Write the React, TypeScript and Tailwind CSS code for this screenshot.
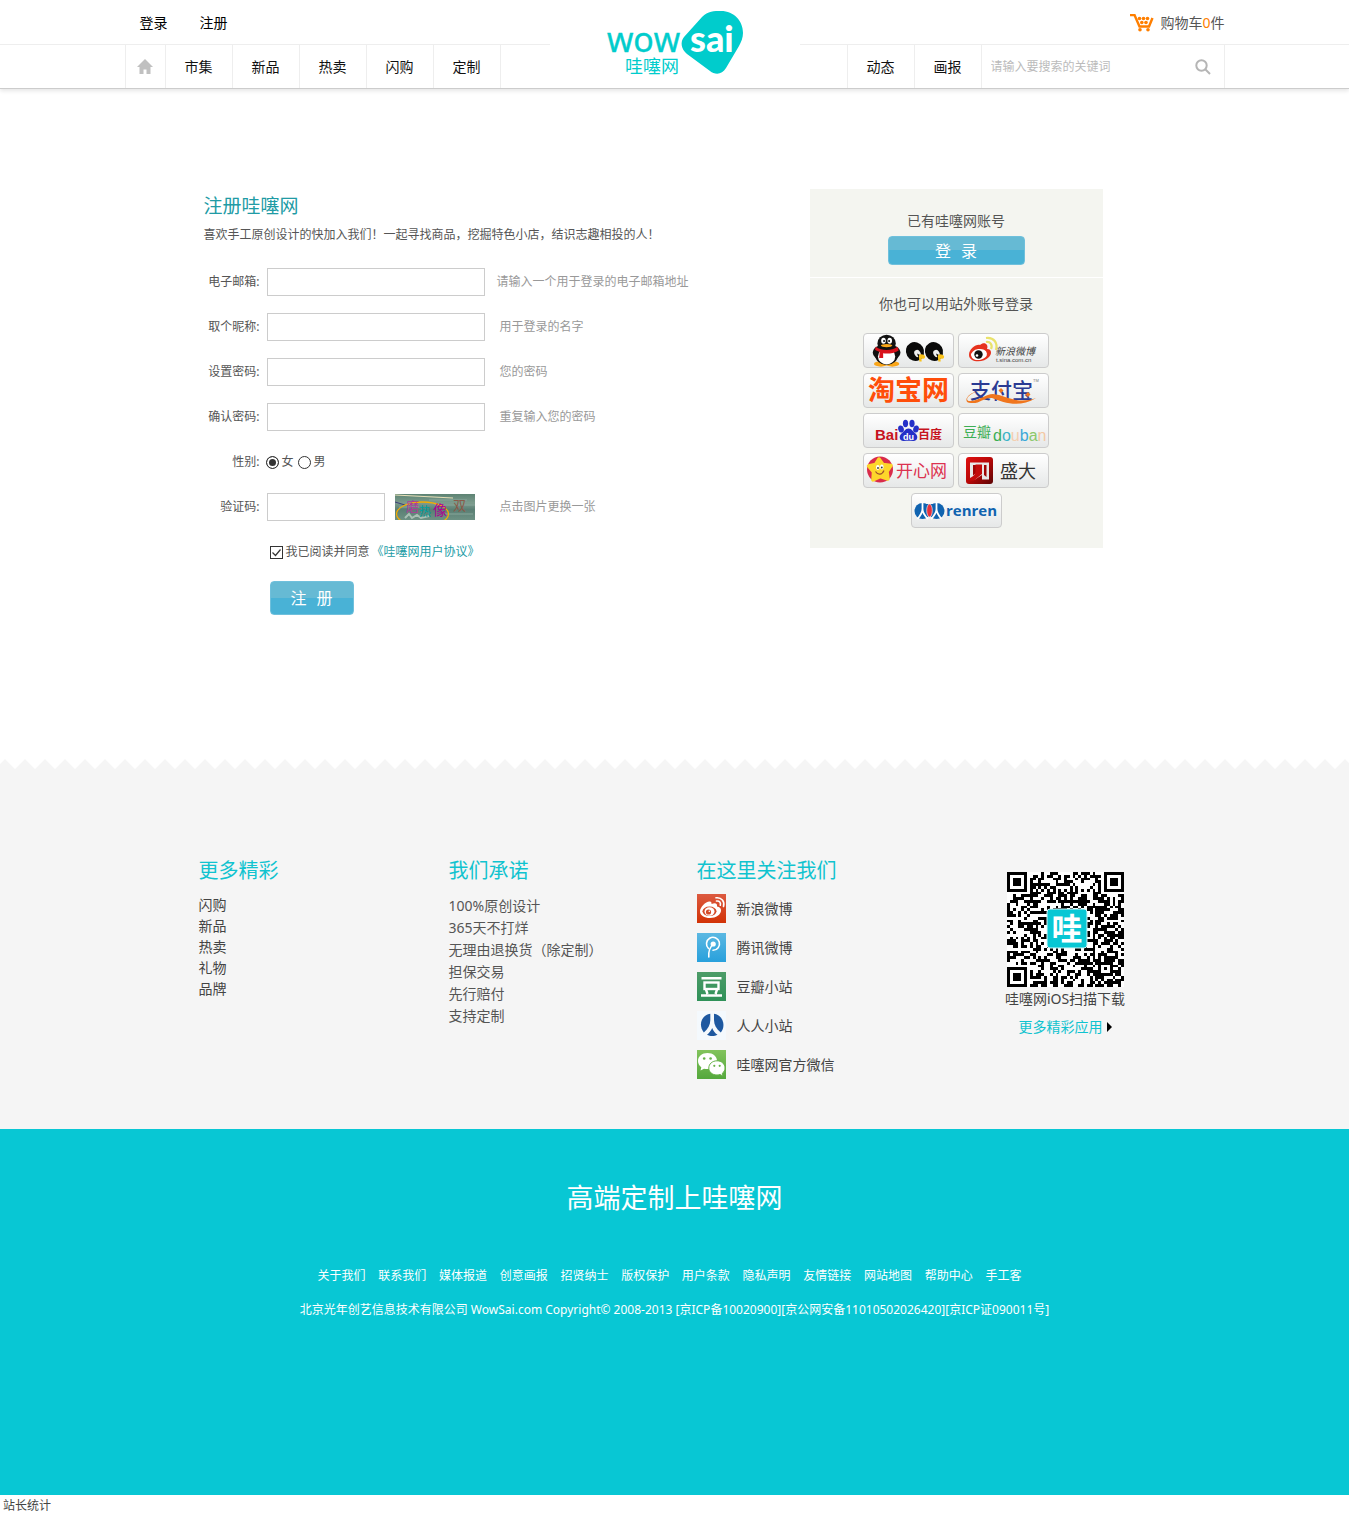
import type { ReactNode } from 'react';

const FONT = "font-['Noto_Sans','Noto_Sans_CJK_SC',sans-serif]";

function SiteLogo() {
  return (
    <svg viewBox="0 0 250 88" className="h-[88px] w-[250px]" role="img" aria-label="wowsai 哇噻网">
      <path
        d="M134 37 L152 17 C158 11 164 11 171 11 C184 11 193 21 193 33 C193 38 191 42 189 46 L176 68 C172 75 165 75 160 71 L137 54 C131 49 130 42 134 37Z"
        fill="#00cccc"
      />
      <g fill="#00cccc">
        <text x="57" y="52" fontFamily="Open Sans" fontSize="34" stroke="#00cccc" strokeWidth="0.5">wow</text>
        <text x="75" y="73" fontFamily="Noto Sans CJK SC" fontSize="18">哇噻网</text>
      </g>
      <text x="140" y="52" fontFamily="Lato" fontWeight="900" fontSize="36" fill="#fff">sai</text>
    </svg>
  );
}

function HomeIcon() {
  return (
    <svg viewBox="0 0 16 15" className="h-[15px] w-4" fill="#c0c0c0" aria-hidden="true">
      <path d="M8 0 16 8H13.500V15H9.500V10.500H6.500V15H2.500V8H0Z" />
    </svg>
  );
}

function CartIcon() {
  return (
    <svg viewBox="0 0 24 18" className="h-[18px] w-6" aria-hidden="true">
      <path d="M0 1H4.500L9.500 12.500H19L22.500 4" fill="none" stroke="#ff7f00" strokeWidth="2.400" />
      <g fill="#ff7f00">
        <circle cx="9.500" cy="4.500" r="1.800" />
        <circle cx="13.500" cy="4.500" r="1.800" />
        <circle cx="17.500" cy="4.500" r="1.800" />
        <circle cx="11.800" cy="8.500" r="1.800" />
        <circle cx="16" cy="8.500" r="1.800" />
        <circle cx="10" cy="15.800" r="1.800" />
        <circle cx="18" cy="15.800" r="1.800" />
      </g>
    </svg>
  );
}

function SearchIcon() {
  return (
    <svg viewBox="0 0 16 16" className="size-4" fill="none" stroke="#b5b5b5" strokeWidth="2" aria-hidden="true">
      <circle cx="6.500" cy="6.500" r="5.200" />
      <path d="m10.500 10.500 4.500 4.500" />
    </svg>
  );
}

function NavLink({ children }: { children: ReactNode }) {
  return (
    <a href="#" className="flex w-[67px] items-center justify-center border-l border-[#eee] text-sm text-[#111]">
      {children}
    </a>
  );
}

function Header() {
  return (
    <header className="grid grid-cols-[1fr_250px_1fr] border-b border-[#ccc] bg-white shadow-[0_2px_4px_rgba(0,0,0,0.1)]">
      <div>
        <div className="flex h-[45px] justify-end border-b border-[#eee] pt-[2px]">
          <div className="flex w-full max-w-[425px] items-center gap-8 pl-[15px] text-sm text-black">
            <a href="#">登录</a>
            <a href="#">注册</a>
          </div>
        </div>
        <nav className="ml-auto flex h-[43px] w-full max-w-[425px]">
          <a href="#" aria-label="首页" className="flex w-[40px] items-center justify-center border-l border-[#eee]">
            <HomeIcon />
          </a>
          {['市集', '新品', '热卖', '闪购', '定制'].map((t) => (
            <NavLink key={t}>{t}</NavLink>
          ))}
          <span className="border-l border-[#eee]" />
        </nav>
      </div>
      <a href="#">
        <SiteLogo />
      </a>
      <div>
        <div className="flex h-[45px] border-b border-[#eee] pt-[2px]">
          <a href="#" className="flex w-full max-w-[425px] items-center justify-end gap-[6px] text-sm text-[#555]">
            <CartIcon />
            <span>
              购物车<span className="text-[#ff7f00]">0</span>件
            </span>
          </a>
        </div>
        <div className="flex h-[43px] w-full max-w-[425px] pl-[47px]">
          <NavLink>动态</NavLink>
          <NavLink>画报</NavLink>
          <form className="flex flex-1 items-center border-x border-[#eee] pr-[13px] pl-[9px]">
            <input
              type="text"
              aria-label="搜索"
              placeholder="请输入要搜索的关键词"
              className="min-w-0 flex-1 text-xs outline-none placeholder:text-[#bbb]"
            />
            <button type="button" aria-label="搜索">
              <SearchIcon />
            </button>
          </form>
        </div>
      </div>
    </header>
  );
}

function Captcha() {
  return (
    <svg viewBox="0 0 80 26" className="h-[26px] w-20" role="img" aria-label="验证码图片">
      <defs>
        <linearGradient id="captcha-bg" x1="0" y1="0" x2="0" y2="1">
          <stop offset="0" stopColor="#5d8373" />
          <stop offset="0.35" stopColor="#7d9c8e" />
          <stop offset="0.6" stopColor="#5a7f74" />
          <stop offset="1" stopColor="#6d9184" />
        </linearGradient>
      </defs>
      <rect width="80" height="26" fill="url(#captcha-bg)" />
      <path d="M34 6h38M40 11h40M50 20h28M4 13h20" stroke="#88a69a" strokeWidth="1" />
      <path d="M10 24l4-4 3 4 5-3 4 3 8-2" fill="none" stroke="#a9c0b4" strokeWidth="2" />
      <path d="M0 1 58 4" stroke="#e8e0b8" strokeWidth="1" />
      <path d="M0 8 10 11" stroke="#3c3c78" strokeWidth="1" />
      <ellipse cx="27.500" cy="20" rx="26" ry="12" fill="none" stroke="#f5ac00" strokeWidth="1.300" />
      <g fontFamily="Noto Sans CJK SC">
        <text x="11" y="17" fontSize="13" fill="#b0389a">磨</text>
        <text x="24" y="22" fontSize="12" fill="#00a0a0">热</text>
        <text x="38" y="21" fontSize="14" fill="#b00090">像</text>
        <text x="58" y="16" fontSize="13" fill="#8a5a48">双</text>
      </g>
    </svg>
  );
}

const GLOSSY =
  'rounded border border-[#6fc0dc] bg-[linear-gradient(#66bad4_50%,#49b2d6_50%)] text-base text-white';

type FieldProps = { id: string; label: string; hint: string; type?: string; hintGap?: string };

function Field({ id, label, hint, type = 'text', hintGap = 'ml-[15px]' }: FieldProps) {
  return (
    <div className="flex h-7 items-center">
      <label htmlFor={id} className="w-14 text-right">{label}:</label>
      <input id={id} type={type} className="ml-[7px] h-7 w-[218px] border border-[#ccc] px-2 outline-none" />
      <span className={`${hintGap} text-[#999]`}>{hint}</span>
    </div>
  );
}

function Radio({ label, checked }: { label: string; checked?: boolean }) {
  return (
    <label className="flex items-center gap-[3px]">
      <input
        type="radio"
        name="gender"
        defaultChecked={checked}
        className="size-[13px] appearance-none rounded-full border border-[#333] bg-white checked:bg-[#333] checked:shadow-[inset_0_0_0_2px_#fff]"
      />
      <span>{label}</span>
    </label>
  );
}

function RegisterForm() {
  return (
    <form className="text-xs text-[#555]">
      <h1 className="text-[19px] leading-[34px] text-[#219ba5]">注册哇噻网</h1>
      <p className="leading-6">喜欢手工原创设计的快加入我们！一起寻找商品，挖掘特色小店，结识志趣相投的人！</p>
      <div className="mt-[21px] flex flex-col gap-[17px]">
        <Field id="email" label="电子邮箱" hint="请输入一个用于登录的电子邮箱地址" hintGap="ml-3" />
        <Field id="nick" label="取个昵称" hint="用于登录的名字" />
        <Field id="password" label="设置密码" hint="您的密码" type="password" />
        <Field id="confirm" label="确认密码" hint="重复输入您的密码" type="password" />
        <div className="flex h-7 items-center">
          <span className="w-14 text-right">性别:</span>
          <div className="ml-[6px] flex gap-1">
            <Radio label="女" checked />
            <Radio label="男" />
          </div>
        </div>
        <div className="flex h-7 items-center">
          <label htmlFor="code" className="w-14 text-right">验证码:</label>
          <input id="code" type="text" className="ml-[7px] h-7 w-[118px] border border-[#ccc] px-2 outline-none" />
          <button type="button" className="ml-[10px]">
            <Captcha />
          </button>
          <span className="ml-[25px] text-[#999]">点击图片更换一张</span>
        </div>
        <div className="flex h-7 items-center pl-[66px]">
          <span className="grid size-[13px] place-items-center">
            <input
              id="agree"
              type="checkbox"
              defaultChecked
              className="peer col-start-1 row-start-1 size-[13px] appearance-none border border-[#333] bg-white"
            />
            <svg
              viewBox="0 0 13 13"
              className="pointer-events-none invisible col-start-1 row-start-1 size-[13px] peer-checked:visible"
              fill="none"
              stroke="#333"
              strokeWidth="1.200"
              aria-hidden="true"
            >
              <path d="m2.500 6.500 3 3 5-6" />
            </svg>
          </span>
          <label htmlFor="agree" className="ml-[3px]">我已阅读并同意</label>
          <a href="#" className="ml-[2px] text-[#219ba5]">《哇噻网用户协议》</a>
        </div>
      </div>
      <button type="button" className={`${GLOSSY} mt-[15px] ml-[66px] flex h-[34px] w-[84px] items-center justify-center gap-[10px]`}>
        <span>注</span>
        <span>册</span>
      </button>
    </form>
  );
}

function QqLogo() {
  return (
    <>
      <g transform="translate(-4 -2) scale(1.150 1.080)">
        <ellipse cx="24" cy="20" rx="12" ry="8" fill="#111" />
        <ellipse cx="19" cy="30.500" rx="6" ry="2.500" fill="#f9a61a" />
        <ellipse cx="29" cy="30.500" rx="6" ry="2.500" fill="#f9a61a" />
        <ellipse cx="24" cy="22" rx="10" ry="9.500" fill="#111" />
        <ellipse cx="24" cy="23.500" rx="7.500" ry="7.500" fill="#fff" />
        <ellipse cx="24" cy="11.500" rx="8" ry="8" fill="#111" />
        <ellipse cx="21.300" cy="9" rx="2" ry="2.800" fill="#fff" />
        <ellipse cx="26.700" cy="9" rx="2" ry="2.800" fill="#fff" />
        <circle cx="21.800" cy="9.300" r="0.900" fill="#111" />
        <circle cx="26.200" cy="9.300" r="0.900" fill="#111" />
        <ellipse cx="24" cy="13.500" rx="5" ry="1.500" fill="#f9a61a" />
        <path d="M14.500 14.500C20 18.500 28 18.500 33.500 14.500L34.500 18C30 21 24 21.300 21 20.500V25H17.500L18 19.500L14 17.500Z" fill="#d8121b" />
      </g>
      {[0, 19].map((dx) => (
        <g key={dx} transform={`translate(${dx} 0)`}>
          <ellipse cx="52" cy="18.500" rx="9" ry="9.500" fill="#0a0a0a" transform="rotate(-30 52 18.500)" />
          <ellipse cx="54.500" cy="20.500" rx="3" ry="3.800" fill="#eee" transform="rotate(-30 54.500 20.500)" />
          <path d="M54 20.500 61 24 56 26Z" fill="#0a0a0a" />
          <ellipse cx="59" cy="23.500" rx="3.200" ry="2" fill="#f9c21a" transform="rotate(20 59 23.500)" />
          <path d="M57 23 57.500 28.500" stroke="#f9c21a" strokeWidth="2.400" />
        </g>
      ))}
    </>
  );
}

function WeiboLogo() {
  return (
    <>
      <path d="M11 22C11 16 18 11 22 12C26 8 31 11 29 16C34 16 34 21 31 24C26 30 11 30 11 22Z" fill="#e6321e" />
      <ellipse cx="21" cy="21.500" rx="8" ry="5.500" fill="#fff" transform="rotate(-8 21 21.500)" />
      <circle cx="20.500" cy="21.500" r="4.200" fill="#111" />
      <circle cx="19" cy="22.500" r="1.300" fill="#fff" />
      <path d="M28 9C32 8 35 12 33 16M28 5C36 4 40 10 38 17" fill="none" stroke="#e9e26b" strokeWidth="2.200" />
      <text x="37" y="22" fontSize="10" fill="#444" fontStyle="italic" fontFamily="Noto Sans CJK SC">新浪微博</text>
      <text x="38" y="29" fontSize="6" fill="#444" fontFamily="Liberation Sans">t.sina.com.cn</text>
    </>
  );
}

function TaobaoLogo() {
  return (
    <text x="5" y="27" fontSize="27" fontWeight="700" fill="#ff4e0a" fontFamily="Noto Sans CJK SC">淘宝网</text>
  );
}

function AlipayLogo() {
  return (
    <>
      <text x="12" y="25" fontSize="21" fontWeight="500" fill="#2a3a93" fontFamily="Noto Sans CJK SC">支付宝</text>
      <path d="M22 18C10 20 5 29 13 28C22 27 28 21 35 21C48 22 58 32 78 25C62 35 46 30 34 25C26 24 22 31 13 30C4 30 9 19 22 18Z" fill="#f0761d" />
      <path d="m43 15 2.500 2.500L43 20l-2.500-2.500ZM70 19l2.500 2.500L70 24l-2.500-2.500Z" fill="#f0761d" />
      <text x="75" y="9" fontSize="4" fill="#777" fontFamily="Liberation Sans">TM</text>
    </>
  );
}

function BaiduLogo() {
  return (
    <>
      <text x="12" y="27" fontSize="15" fontWeight="700" fill="#c7141e" fontFamily="Liberation Sans">Bai</text>
      <text x="55" y="26" fontSize="12" fontWeight="700" fill="#c7141e" fontFamily="Noto Sans CJK SC">百度</text>
      <g fill="#2430c8">
        <ellipse cx="38" cy="16" rx="2.800" ry="3.600" transform="rotate(-15 38 16)" />
        <ellipse cx="42.500" cy="10.500" rx="2.600" ry="3.700" />
        <ellipse cx="49" cy="10.500" rx="2.600" ry="3.700" />
        <ellipse cx="53" cy="16" rx="2.800" ry="3.600" transform="rotate(15 53 16)" />
        <path d="M45.500 15.500C49 15.500 50 19 52.500 20.500C56 23.500 54 28.500 50 28C47 27.500 44 27.500 41 28C37 28.500 35 23.500 38.500 20.500C41 19 42 15.500 45.500 15.500Z" />
      </g>
      <text x="40" y="26.500" fontSize="9" fontWeight="700" fill="#fff" fontFamily="Liberation Sans">du</text>
    </>
  );
}

function DoubanLogo() {
  return (
    <>
      <text x="5" y="24" fontSize="14" fill="#3cae54" fontFamily="Noto Sans CJK SC">豆瓣</text>
      <text x="35" y="28" fontSize="16" fontFamily="Liberation Sans">
        <tspan fill="#3cae54">d</tspan>
        <tspan fill="#3cb4c8">o</tspan>
        <tspan fill="#f3cfb0">u</tspan>
        <tspan fill="#3ca8d8">b</tspan>
        <tspan fill="#8cc86a">a</tspan>
        <tspan fill="#f3c8a4">n</tspan>
      </text>
    </>
  );
}

function KaixinLogo() {
  return (
    <>
      <circle cx="17" cy="16.500" r="13" fill="#d92b4b" />
      <path
        d="M16 6 20 11.500 28 12.500 24 18.500 25 26 17.500 23.500 10 27 10.500 19 5.500 13 12.500 11.500Z"
        fill="#fdd62b"
        stroke="#fdd62b"
        strokeWidth="3.500"
        strokeLinejoin="round"
      />
      <ellipse cx="14.800" cy="14.500" rx="1.800" ry="2.400" fill="#fff" />
      <ellipse cx="18.800" cy="14" rx="1.800" ry="2.400" fill="#fff" />
      <circle cx="15" cy="15" r="0.900" fill="#333" />
      <circle cx="18.800" cy="14.500" r="0.900" fill="#333" />
      <path d="M12.500 18.500C15 22.500 19 22 21 17.500" fill="none" stroke="#a0522d" strokeWidth="1.200" />
      <text x="33" y="24" fontSize="17" fill="#dc3250" fontFamily="Noto Sans CJK SC">开心网</text>
    </>
  );
}

function ShandaLogo() {
  return (
    <>
      <defs>
        <linearGradient id="shanda-bg" x1="0" y1="0" x2="1" y2="1">
          <stop offset="0" stopColor="#e01010" />
          <stop offset="0.5" stopColor="#b80808" />
          <stop offset="1" stopColor="#5a0404" />
        </linearGradient>
      </defs>
      <rect x="8" y="4" width="27" height="27" rx="3" fill="url(#shanda-bg)" />
      <path d="M12 9.500H31V26.500H24V22L17 26.500H12Z" fill="#e8e8e8" />
      <path d="M15 12H18V20L15 22.500ZM26 12H28.500V24L26 22Z" fill="#a00606" />
      <path d="M17.500 11.500H24V21L16 27.500H12V25C16 23 17.500 21 17.500 18Z" fill="#c40c0c" />
      <text x="42" y="25" fontSize="18" fill="#333" fontFamily="Noto Sans CJK SC">盛大</text>
    </>
  );
}

function RenrenLogo() {
  return (
    <>
      <g fill="#1063b0">
        <ellipse cx="11.500" cy="18" rx="8" ry="8" />
        <ellipse cx="25.500" cy="18" rx="8" ry="8" />
        <rect x="14" y="11" width="9" height="11" />
      </g>
      <path
        d="M11.500 9V16C11.500 20 9 23 6.500 26M11.500 16C11.500 20 14 23 17 26M25.500 9V16C25.500 20 23 23 20 26M25.500 16C25.500 20 28 23 30.500 26"
        fill="none"
        stroke="#fff"
        strokeWidth="1.800"
      />
      <ellipse cx="18.500" cy="17.500" rx="2.800" ry="6.500" fill="#e8303a" stroke="#fff" strokeWidth="0.600" />
      <text x="35" y="23" fontSize="15" fontWeight="700" fill="#1063b0" fontFamily="Open Sans">renren</text>
    </>
  );
}

const PARTNERS = [
  { name: 'QQ', logo: <QqLogo /> },
  { name: '新浪微博', logo: <WeiboLogo /> },
  { name: '淘宝网', logo: <TaobaoLogo /> },
  { name: '支付宝', logo: <AlipayLogo /> },
  { name: '百度', logo: <BaiduLogo /> },
  { name: '豆瓣', logo: <DoubanLogo /> },
  { name: '开心网', logo: <KaixinLogo /> },
  { name: '盛大', logo: <ShandaLogo /> },
  { name: '人人网', logo: <RenrenLogo /> },
];

function LoginPanel() {
  return (
    <aside className="w-[293px] shrink-0 bg-[#f4f5f0] text-sm text-[#555]">
      <div className="flex flex-col items-center border-b border-white pt-5 pb-3">
        <p className="leading-6">已有哇噻网账号</p>
        <button type="button" className={`${GLOSSY} mt-[3px] flex h-[29px] w-[137px] items-center justify-center gap-[10px]`}>
          <span>登</span>
          <span>录</span>
        </button>
      </div>
      <div className="flex flex-col items-center pt-[14px] pb-5">
        <p className="leading-6">你也可以用站外账号登录</p>
        <div className="mt-[17px] flex w-[186px] flex-wrap justify-center gap-x-1 gap-y-[5px]">
          {PARTNERS.map((p) => (
            <a
              key={p.name}
              href="#"
              aria-label={p.name}
              className="h-[35px] w-[91px] rounded border border-[#ccc] bg-linear-to-b from-white to-[#e6e8e8]"
            >
              <svg viewBox="1 1 89 33" className="h-[33px] w-[89px] overflow-visible" aria-hidden="true">
                {p.logo}
              </svg>
            </a>
          ))}
        </div>
      </div>
    </aside>
  );
}

const QR_SIZE = 41;

function buildQrPath() {
  let seed = 20131;
  const next = () => {
    seed = (seed * 1103515245 + 12345) % 2147483648;
    return seed / 2147483648;
  };
  const finder = (x: number, y: number) => {
    const d = Math.max(Math.abs(x - 3), Math.abs(y - 3));
    return d === 3 || d <= 1;
  };
  let d = '';
  for (let y = 0; y < QR_SIZE; y++) {
    for (let x = 0; x < QR_SIZE; x++) {
      let on = next() > 0.48;
      const far = QR_SIZE - 7;
      if (x < 8 && y < 8) on = x < 7 && y < 7 && finder(x, y);
      else if (x >= far - 1 && y < 8) on = x >= far && y < 7 && finder(x - far, y);
      else if (x < 8 && y >= far - 1) on = x < 7 && y >= far && finder(x, y - far);
      else if (x === 6 || y === 6) on = (x + y) % 2 === 0;
      const a = Math.max(Math.abs(x - 34), Math.abs(y - 34));
      if (a <= 2) on = a !== 1;
      if (on) d += `M${x} ${y}h1v1h-1z`;
    }
  }
  return d;
}

const QR_PATH = buildQrPath();

function QrCode() {
  return (
    <svg viewBox="0 0 117 115" className="h-[115px] w-[117px]" role="img" aria-label="哇噻网 iOS 下载二维码">
      <rect width="117" height="115" fill="#fff" />
      <path d={QR_PATH} transform="scale(2.8537 2.8049)" fill="#000" shapeRendering="crispEdges" />
      <rect x="40" y="37" width="40" height="39" rx="3" fill="#08c7d4" stroke="#d8f6f8" strokeWidth="1" />
      <text x="44.500" y="68" fontSize="31" fontWeight="700" fill="#fff" fontFamily="Noto Sans CJK SC">哇</text>
    </svg>
  );
}

function Tile({ id, from, to, children }: { id: string; from: string; to: string; children: ReactNode }) {
  return (
    <svg viewBox="0 0 29 29" className="size-[29px]" aria-hidden="true">
      <defs>
        <linearGradient id={id} x1="0" y1="0" x2="0" y2="1">
          <stop offset="0" stopColor={from} />
          <stop offset="1" stopColor={to} />
        </linearGradient>
      </defs>
      <rect width="29" height="29" fill={`url(#${id})`} />
      {children}
    </svg>
  );
}

const FOLLOW = [
  {
    name: '新浪微博',
    icon: (
      <Tile id="tile-sina" from="#dc5a40" to="#d23206">
        <path d="M3 17.500C3 13 9 7 13 7.500C15 8 14.500 10 14.500 10C18 8.500 20.500 9 20 12.500C23 13 24 14.500 24 16.500C24 20.500 19 24 13 24C7.500 24 3 21.500 3 17.500Z" fill="#fff" />
        <ellipse cx="12.500" cy="17.300" rx="7" ry="4.800" fill="#d54a28" />
        <ellipse cx="12.500" cy="17.500" rx="5" ry="4.200" fill="#fff" />
        <circle cx="11.500" cy="18" r="2.600" fill="#d54a28" />
        <circle cx="12.300" cy="17.200" r="0.800" fill="#fff" />
        <path d="M19.500 7C22.500 6.500 24 9 23.300 11.300M19 3.800C24.500 3 28 7.500 26.500 12.500" fill="none" stroke="#fff" strokeWidth="1.600" strokeLinecap="round" />
      </Tile>
    ),
  },
  {
    name: '腾讯微博',
    icon: (
      <Tile id="tile-tencent" from="#5cb8e2" to="#28a0dc">
        <g fill="none" stroke="#fff" strokeLinecap="round">
          <path d="M11.500 15.500A6.500 6.500 0 1 1 16 17.300" strokeWidth="1.600" />
          <path d="M16 11.500C13 14 11.300 18 11.800 24" strokeWidth="1.600" />
        </g>
        <circle cx="16.200" cy="11" r="2.600" fill="#fff" />
      </Tile>
    ),
  },
  {
    name: '豆瓣小站',
    icon: (
      <Tile id="tile-douban" from="#4d9c68" to="#2f9158">
        <path d="M4.500 6.300H24.500M4 23.500H25M9 17.500 10.500 22M20 17.500 18.500 22" stroke="#fff" strokeWidth="2.400" />
        <rect x="7.500" y="10.500" width="14" height="6.500" fill="none" stroke="#fff" strokeWidth="2.400" />
      </Tile>
    ),
  },
  {
    name: '人人小站',
    icon: (
      <Tile id="tile-renren" from="#f4f9fd" to="#f4f9fd">
        <g fill="#1d58a0">
          <path d="M13.300 2.800V9C13.300 14 11 18 6.800 21.500C1.500 15 3.500 4.500 13.300 2.800Z" />
          <path d="M17 2.800V9C17 14 19.300 18 23.800 21.500C29 15 26.500 4.500 17 2.800Z" />
          <path d="M15.200 17C14 20 12 22 10 23.800C13 25.500 17.500 25.500 20.500 23.800C18 22 16.200 20 15.200 17Z" />
        </g>
      </Tile>
    ),
  },
  {
    name: '哇噻网官方微信',
    icon: (
      <Tile id="tile-wechat" from="#82c35c" to="#54a83c">
        <path d="M10.500 3C5 3 1 6.500 1 11C1 13.500 2.300 15.700 4.300 17.200L3.500 20.500L7 18.700C8.200 19 9.300 19 10.500 19C16 19 20 15.500 20 11C20 6.500 16 3 10.500 3Z" fill="#fff" />
        <path d="M20 10.800C15.300 10.800 11.800 14 11.800 18C11.800 22 15.300 25 20 25C21 25 22 24.800 23 24.500L26 26L25.300 23.300C27 22 28 20.200 28 18C28 14 24.700 10.800 20 10.800Z" fill="#fff" stroke="#66b248" strokeWidth="1" />
        <g fill="#66b248">
          <circle cx="7.200" cy="8.500" r="1.300" />
          <circle cx="13.600" cy="8.500" r="1.300" />
          <circle cx="17.300" cy="15.800" r="1.100" />
          <circle cx="22.700" cy="15.800" r="1.100" />
        </g>
      </Tile>
    ),
  },
];

function FooterHeading({ children }: { children: ReactNode }) {
  return <h2 className="text-xl leading-[34px] text-[#10c3cf]">{children}</h2>;
}

function InfoSection() {
  return (
    <section>
      <svg className="block h-[10px] w-full" aria-hidden="true">
        <defs>
          <pattern id="zigzag" width="20" height="10" patternUnits="userSpaceOnUse">
            <path d="M0 5 5 0 15 10H0ZM15 10 20 5V10Z" fill="#f5f5f5" />
          </pattern>
        </defs>
        <rect width="100%" height="10" fill="url(#zigzag)" />
      </svg>
      <div className="bg-[#f5f5f5] pt-[85px] pb-[50px]">
        <div className="mx-auto grid max-w-[960px] grid-cols-[250px_248px_309px_1fr] pl-1 text-sm text-[#444]">
          <div>
            <FooterHeading>更多精彩</FooterHeading>
            <ul className="mt-[6px] leading-[21px]">
              {['闪购', '新品', '热卖', '礼物', '品牌'].map((t) => (
                <li key={t}>
                  <a href="#">{t}</a>
                </li>
              ))}
            </ul>
          </div>
          <div>
            <FooterHeading>我们承诺</FooterHeading>
            <ul className="mt-[7px] leading-[22px] text-[#555]">
              {['100%原创设计', '365天不打烊', '无理由退换货（除定制）', '担保交易', '先行赔付', '支持定制'].map((t) => (
                <li key={t}>{t}</li>
              ))}
            </ul>
          </div>
          <div>
            <FooterHeading>在这里关注我们</FooterHeading>
            <ul className="mt-[6px] flex flex-col gap-[10px]">
              {FOLLOW.map((f) => (
                <li key={f.name}>
                  <a href="#" className="flex items-center gap-[11px]">
                    {f.icon}
                    <span>{f.name}</span>
                  </a>
                </li>
              ))}
            </ul>
          </div>
          <div className="mt-[18px] flex w-[119px] flex-col items-center leading-6">
            <QrCode />
            <span className="whitespace-nowrap">哇噻网iOS扫描下载</span>
            <a href="#" className="mt-1 flex items-center gap-1 text-[#10c3cf]">
              更多精彩应用
              <svg viewBox="0 0 5 10" className="h-[10px] w-[5px]" aria-hidden="true">
                <path d="M0 0 5 5 0 10Z" fill="#000" />
              </svg>
            </a>
          </div>
        </div>
      </div>
    </section>
  );
}

const LINKS = [
  '关于我们', '联系我们', '媒体报道', '创意画报', '招贤纳士', '版权保护',
  '用户条款', '隐私声明', '友情链接', '网站地图', '帮助中心', '手工客',
];

function Footer() {
  return (
    <footer>
      <div className="bg-[#08c7d4] pt-[49px] pb-[173px] text-center text-xs text-white">
        <p className="text-[27px] leading-10">高端定制上哇噻网</p>
        <nav className="mt-[45px] font-['Noto_Sans_CJK_SC',sans-serif] leading-6">
          {LINKS.map((t) => (
            <span key={t}>
              <a href="#" className="mr-[10px]">{t}</a>{' '}
            </span>
          ))}
        </nav>
        <p className="mt-[11px] leading-6">
          北京光年创艺信息技术有限公司 WowSai.com Copyright© 2008-2013 [京ICP备10020900][京公网安备11010502026420][京ICP证090011号]
        </p>
      </div>
      <a href="#" className="ml-[3px] block text-xs leading-[22px] text-[#444]">站长统计</a>
    </footer>
  );
}

export default function App() {
  return (
    <div className={`${FONT} bg-white`}>
      <Header />
      <main className="mx-auto flex max-w-[960px] items-start justify-between pt-[100px] pr-[52px] pb-36 pl-[9px]">
        <RegisterForm />
        <LoginPanel />
      </main>
      <InfoSection />
      <Footer />
    </div>
  );
}
